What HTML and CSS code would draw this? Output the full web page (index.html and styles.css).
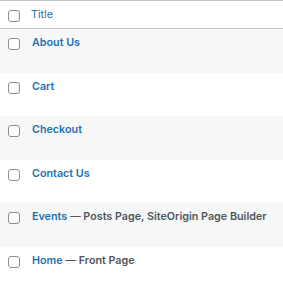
FILE: index.html
```html
<!doctype html>
<html>
<head>
    <meta charset="utf-8">
    <title>Pages</title>
    <link rel="stylesheet" href="styles.css">
</head>
<body>

<div class="list-table">
    <div class="list-head">
        <input type="checkbox" class="check">
        <a href="#" class="col-title">Title</a>
    </div>

    <div class="list-row">
        <input type="checkbox" class="check">
        <strong><a href="#" class="row-title">About Us</a></strong>
    </div>
    <div class="list-row">
        <input type="checkbox" class="check">
        <strong><a href="#" class="row-title">Cart</a></strong>
    </div>
    <div class="list-row">
        <input type="checkbox" class="check">
        <strong><a href="#" class="row-title">Checkout</a></strong>
    </div>
    <div class="list-row">
        <input type="checkbox" class="check">
        <strong><a href="#" class="row-title">Contact Us</a></strong>
    </div>
    <div class="list-row">
        <input type="checkbox" class="check">
        <strong><a href="#" class="row-title">Events</a> — <span class="post-state">Posts Page, SiteOrigin Page Builder</span></strong>
    </div>
    <div class="list-row">
        <input type="checkbox" class="check">
        <strong><a href="#" class="row-title">Home</a> — <span class="post-state">Front Page</span></strong>
    </div>
</div>

</body>
</html>
```

FILE: styles.css
```css
html { font-family: Inter, "Liberation Sans", Arial, sans-serif; }
body { margin: 0; background: #fff; }
a { text-decoration: none; }

.list-table { font-size: 10.75px; line-height: 14px; color: #50575e; }

.list-head {
    display: flex; align-items: flex-start;
    height: 27px;
    border-top: 1px solid #c3c4c7;
    border-bottom: 1px solid #c3c4c7;
}
.list-head .check { margin-top: 9px; }
.col-title { color: #2271b1; padding: 7px 0 0 11px; }

.list-row {
    display: flex; align-items: flex-start;
    height: 43.5px;
}
.list-row:nth-child(even) { background: #f6f7f7; }
.list-row .check { margin-top: 9px; }
.list-row strong { padding: 7px 0 0 12px; font-weight: 600; color: #50575e; }
.row-title { color: #2271b1; }

.check {
    appearance: none; -webkit-appearance: none;
    box-sizing: border-box;
    width: 12px; height: 12px; margin: 0 0 0 8px;
    border: 1px solid #8c8f94; border-radius: 3px;
    background: #fff; flex: none;
}
```
